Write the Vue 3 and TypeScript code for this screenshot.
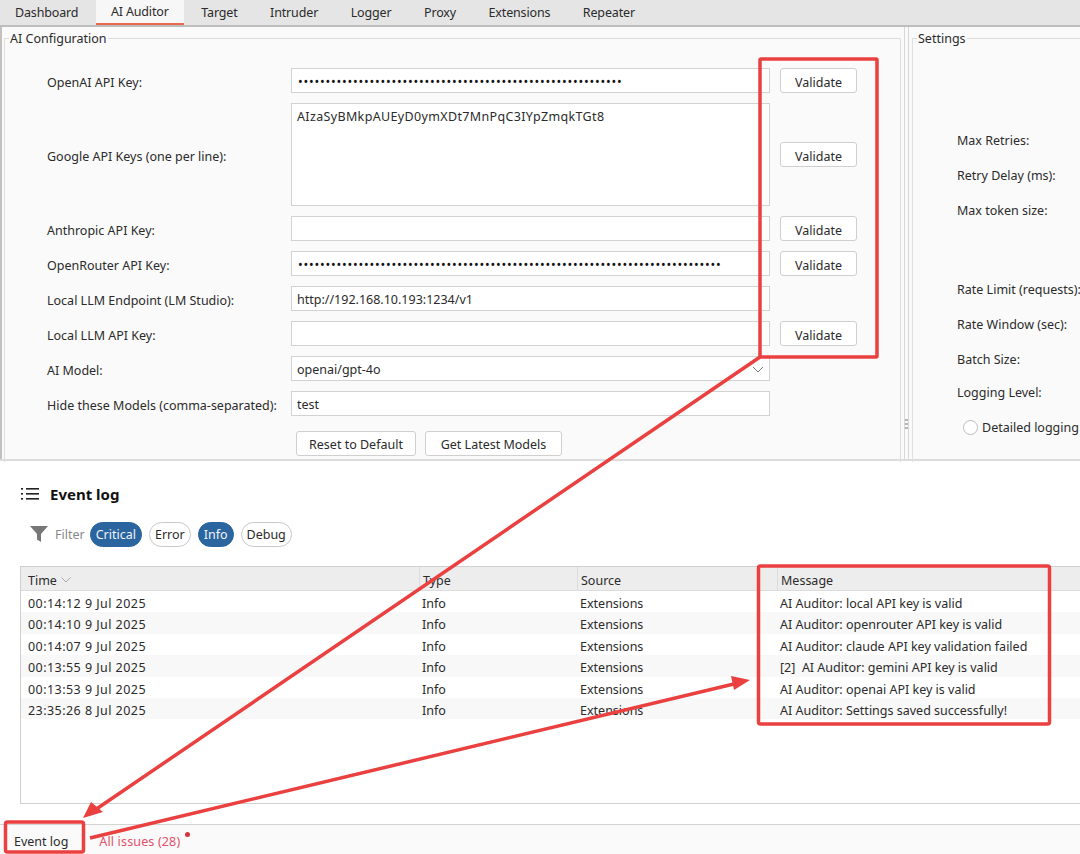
<template>
  <div class="page">
    <nav class="tabs">
      <div v-for="t in tabs" :key="t" class="tab" :class="{ active: t === 'AI Auditor' }">{{ t }}</div>
    </nav>

    <section class="top">
      <div class="config">
        <fieldset class="group">
          <legend>AI Configuration</legend>
          <div class="form">
            <template v-for="row in rows" :key="row.label">
              <label class="lbl">{{ row.label }}</label>
              <textarea v-if="row.kind === 'area'" class="field area" readonly :value="row.value"></textarea>
              <div v-else-if="row.kind === 'select'" class="field select">
                <span>{{ row.value }}</span>
                <svg width="12" height="7" viewBox="0 0 12 7"><path d="M1 1l5 5 5-5" fill="none" stroke="#777" stroke-width="1"/></svg>
              </div>
              <input v-else class="field" :class="{ dots: row.kind === 'dots' }" readonly :value="row.value" />
              <button v-if="row.validate" class="btn validate">Validate</button>
              <span v-else></span>
            </template>
            <div class="actions">
              <button class="btn reset">Reset to Default</button>
              <button class="btn latest">Get Latest Models</button>
            </div>
          </div>
        </fieldset>
      </div>

      <div class="splitter"><i></i><i></i><i></i></div>

      <div class="settings">
        <fieldset class="group side">
          <legend>Settings</legend>
          <div class="side-list">
            <div v-for="s in settings" :key="s.label" class="side-row" :class="s.cls">{{ s.label }}</div>
            <div class="side-row radio-row"><span class="radio"></span>Detailed logging</div>
          </div>
        </fieldset>
      </div>
    </section>

    <section class="log">
      <header class="log-title">
        <svg width="18" height="14" viewBox="0 0 18 14">
          <g fill="#222">
            <rect x="0" y="1" width="2" height="1.6"/><rect x="0" y="6" width="2" height="1.6"/><rect x="0" y="11" width="2" height="1.6"/>
            <rect x="5" y="1" width="13" height="1.6"/><rect x="5" y="6" width="13" height="1.6"/><rect x="5" y="11" width="13" height="1.6"/>
          </g>
        </svg>
        <h2>Event log</h2>
      </header>

      <div class="filters">
        <svg width="18" height="18" viewBox="0 0 18 18"><path d="M0 1h18l-7 8v8l-4-2.5V9z" fill="#777"/></svg>
        <span class="filter-lbl">Filter</span>
        <span v-for="c in chips" :key="c.name" class="chip" :class="{ on: c.on }">{{ c.name }}</span>
      </div>

      <div class="table">
        <div class="thead">
          <div class="th">Time<svg width="10" height="6" viewBox="0 0 10 6"><path d="M.5.5L5 5 9.5.5" fill="none" stroke="#aaa"/></svg></div>
          <div class="th">Type</div>
          <div class="th">Source</div>
          <div class="th">Message</div>
        </div>
        <div v-for="(e, i) in events" :key="i" class="tr">
          <div class="time">{{ e.time }}</div>
          <div>Info</div>
          <div>Extensions</div>
          <div>{{ e.msg }}</div>
        </div>
      </div>
    </section>

    <footer class="status">
      <span class="st-log">Event log</span>
      <span class="st-issues">All issues (28)<i class="dot"></i></span>
    </footer>

    <!-- marcas rojas encima de la captura -->
    <svg class="marks" width="1080" height="854" viewBox="0 0 1080 854">
      <g fill="none" stroke="#ea4040" stroke-width="3.5" stroke-linejoin="round">
        <rect x="760" y="59" width="117" height="298" rx="1"/>
        <rect x="758.5" y="566" width="291" height="158" rx="2"/>
        <rect x="5.5" y="822" width="78" height="30" rx="2"/>
        <path d="M760 357L92 812"/>
        <path d="M90 838L738 683"/>
      </g>
      <path d="M83 818l8-16 12 10z" fill="#ea4040"/>
      <path d="M750 680l-19-4 3 14z" fill="#ea4040"/>
    </svg>
  </div>
</template>

<script setup lang="ts">
type Row = { label: string; kind: string; value: string; validate: boolean };

const tabs = ["Dashboard", "AI Auditor", "Target", "Intruder", "Logger", "Proxy", "Extensions", "Repeater"];

const rows: Row[] = [
  { label: "OpenAI API Key:", kind: "dots", value: "•".repeat(59), validate: true },
  { label: "Google API Keys (one per line):", kind: "area", value: "AIzaSyBMkpAUEyD0ymXDt7MnPqC3IYpZmqkTGt8", validate: true },
  { label: "Anthropic API Key:", kind: "text", value: "", validate: true },
  { label: "OpenRouter API Key:", kind: "dots", value: "•".repeat(77), validate: true },
  { label: "Local LLM Endpoint (LM Studio):", kind: "text", value: "http://192.168.10.193:1234/v1", validate: false },
  { label: "Local LLM API Key:", kind: "text", value: "", validate: true },
  { label: "AI Model:", kind: "select", value: "openai/gpt-4o", validate: false },
  { label: "Hide these Models (comma-separated):", kind: "text", value: "test", validate: false },
];

const settings = [
  { label: "Max Retries:", cls: "" },
  { label: "Retry Delay (ms):", cls: "" },
  { label: "Max token size:", cls: "gap-after" },
  { label: "Rate Limit (requests):", cls: "" },
  { label: "Rate Window (sec):", cls: "" },
  { label: "Batch Size:", cls: "tight" },
  { label: "Logging Level:", cls: "" },
];

const chips = [
  { name: "Critical", on: true },
  { name: "Error", on: false },
  { name: "Info", on: true },
  { name: "Debug", on: false },
];

const events = [
  { time: "00:14:12 9 Jul 2025", msg: "AI Auditor: local API key is valid" },
  { time: "00:14:10 9 Jul 2025", msg: "AI Auditor: openrouter API key is valid" },
  { time: "00:14:07 9 Jul 2025", msg: "AI Auditor: claude API key validation failed" },
  { time: "00:13:55 9 Jul 2025", msg: "[2]  AI Auditor: gemini API key is valid" },
  { time: "00:13:53 9 Jul 2025", msg: "AI Auditor: openai API key is valid" },
  { time: "23:35:26 8 Jul 2025", msg: "AI Auditor: Settings saved successfully!" },
];
</script>

<style>
html, body { margin: 0; background: #fff; overflow: hidden; }
</style>

<style scoped>
.page {
  position: relative;
  width: 1080px;
  height: 854px;
  overflow: hidden;
  display: flex;
  flex-direction: column;
  font-family: "Noto Sans", "Open Sans", sans-serif;
  font-size: 12.5px;
  color: #2b2b2b;
  background: #fff;
}

/* Tabs */
.tabs {
  flex: none;
  height: 25px;
  display: flex;
  background: #e5e5e5;
  border-bottom: 2px solid #bdbdbd;
}
.tab {
  padding: 0 15px;
  line-height: 25px;
  margin-right: 2.5px;
  letter-spacing: -0.15px;
  white-space: nowrap;
}
.tab.active {
  background: #f7f7f7;
  border-bottom: 2px solid #e8694a;
  height: 25px;
  box-sizing: border-box;
  line-height: 24px;
}

/* Top */
.top {
  flex: none;
  height: 434px;
  display: flex;
  background: #fafafa;
  border-bottom: 2px solid #dcdcdc;
  box-sizing: border-box;
}
.config {
  width: 901px;
  flex: none;
  box-sizing: border-box;
  border-left: 2px solid #c4c0c0;
  padding-left: 2px;
}
.group {
  margin: 3px 0 0;
  padding: 0;
  height: 100%;
  box-sizing: border-box;
  border: 0;
  border-top: 1px solid #dddddd;
  border-left: 1px solid #dddddd;
  border-right: 1px solid #dddddd;
  min-width: 0;
}
.group legend {
  padding: 0 1px;
  margin-left: 4px;
  line-height: 16px;
  transform: translateY(1px);
}
.form {
  display: grid;
  grid-template-columns: 244px 479px 87px;
  grid-template-rows: 25px 103px repeat(7, 25px);
  row-gap: 10px;
  padding: 22px 0 0 42px;
  align-items: center;
}
.lbl {
  white-space: nowrap;
  padding-top: 4px;
}
.field {
  box-sizing: border-box;
  width: 479px;
  height: 25px;
  margin: 0;
  padding: 2px 5px 0;
  border: 1px solid #d2d2d2;
  background: #fff;
  font: inherit;
  color: inherit;
  outline: none;
  display: block;
}
.field.dots {
  padding-left: 6px;
  letter-spacing: 0.8px;
  color: #111;
}
.area {
  height: 103px;
  padding: 4px 5px;
  resize: none;
  letter-spacing: 0.35px;
}
.select {
  display: flex;
  align-items: center;
  justify-content: space-between;
}
.btn {
  box-sizing: border-box;
  height: 25px;
  padding: 2px 0 0;
  border: 1px solid #cfcfcf;
  border-radius: 3px;
  background: #fff;
  font: inherit;
  color: inherit;
}
.validate {
  width: 77px;
  margin-left: 10px;
  padding-top: 4px;
}
.actions {
  grid-column: 2 / 4;
  display: flex;
  gap: 9px;
  margin: 5px 0 0 5px;
  align-self: start;
}
.reset { width: 120px; }
.latest { width: 137px; }

.splitter {
  flex: none;
  width: 5px;
  margin: 0 3px;
  box-sizing: border-box;
  border-left: 1px solid #d8d8d8;
  border-right: 1px solid #d8d8d8;
  display: flex;
  flex-direction: column;
  align-items: center;
  justify-content: flex-end;
  gap: 2px;
  padding-bottom: 30px;
}
.splitter i {
  width: 3px;
  height: 2px;
  background: #b5b5b5;
}

.settings {
  flex: 1;
  min-width: 0;
}
.side { border-right: 0; border-left: 1px solid #e0e0e0; }
.side-list {
  display: flex;
  flex-direction: column;
  padding: 77px 0 0 44px;
  white-space: nowrap;
}
.side-row {
  height: 35px;
  line-height: 35px;
  flex: none;
}
.side-row.gap-after { margin-bottom: 44px; }
.side-row.tight { height: 33px; }
.radio-row {
  display: flex;
  align-items: center;
  gap: 4px;
  padding-left: 6px;
}
.radio {
  width: 13px;
  height: 13px;
  border: 1px solid #bdbdbd;
  border-radius: 50%;
  background: #fff;
}

/* Event log */
.log {
  flex: 1;
  min-height: 0;
  display: flex;
  flex-direction: column;
  padding: 23px 0 0 20px;
}
.log-title {
  display: flex;
  align-items: center;
  gap: 11px;
  height: 20px;
  padding-left: 1px;
}
.log-title h2 {
  margin: 0;
  font-size: 15px;
  font-weight: 700;
  color: #111;
}
.filters {
  display: flex;
  align-items: center;
  margin-top: 17px;
  height: 26px;
  padding-left: 10px;
}
.filter-lbl {
  color: #888;
  margin: 0 5px 0 7px;
}
.chip {
  box-sizing: border-box;
  height: 25px;
  line-height: 23px;
  padding: 0 5px;
  margin-right: 7px;
  border: 1px solid #c9c9c9;
  border-radius: 13px;
  background: #fff;
}
.chip.on {
  background: #2a659f;
  border-color: #2a659f;
  color: #f0f4f8;
}
.table {
  margin-top: 19px;
  height: 238px;
  box-sizing: border-box;
  border: 1px solid #d0d0d0;
  border-right: 0;
}
.thead, .tr {
  display: grid;
  grid-template-columns: 398px 158px 200px 1fr;
}
.thead {
  height: 24px;
  grid-template-rows: 23px;
  background: #ededed;
  border-bottom: 1px solid #dcdcdc;
  box-sizing: border-box;
}
.th {
  line-height: 27px;
  padding-left: 3px;
  border-left: 1px solid #dcdcdc;
}
.th:first-child {
  border-left: 0;
  padding-left: 7px;
}
.th svg { margin-left: 4px; vertical-align: 2px; }
.tr {
  height: 21.4px;
  line-height: 25.4px;
}
.tr > div { padding-left: 3px; white-space: pre; }
.tr > .time {
  padding-left: 7px;
  letter-spacing: 0.45px;
}
.tr:nth-child(odd) { background: #f8f8f8; }

/* Status bar */
.status {
  flex: none;
  height: 30px;
  box-sizing: border-box;
  border-top: 1px solid #d4d4d4;
  background: #fafafa;
  display: flex;
  align-items: center;
  padding: 3px 0 0 14px;
  gap: 31px;
}
.st-issues {
  position: relative;
  color: #e2506a;
  letter-spacing: 0.15px;
}
.dot {
  position: absolute;
  right: -10px;
  top: -1px;
  width: 5px;
  height: 5px;
  border-radius: 50%;
  background: #d8343f;
}

/* Annotations */
.marks {
  position: absolute;
  left: 0;
  top: 0;
  pointer-events: none;
}
</style>
